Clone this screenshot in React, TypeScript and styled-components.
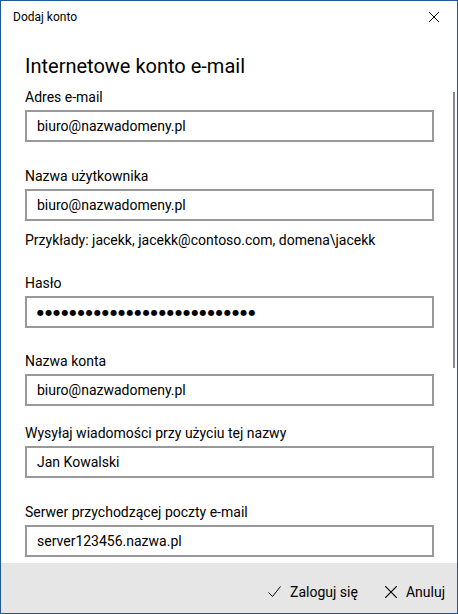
import styled, { createGlobalStyle } from "styled-components";

const GlobalStyle = createGlobalStyle`
  html, body {
    margin: 0;
    padding: 0;
    background: #ffffff;
  }
  body {
    font-family: Roboto, "Noto Sans", sans-serif;
    color: #000;
  }
`;

// window chrome
const Window = styled.div`
  width: 458px;
  height: 614px;
  box-sizing: border-box;
  border: 1px solid #1f5a96;
  display: flex;
  flex-direction: column;
  background: #fff;
  overflow: hidden;
`;

const TitleBar = styled.div`
  flex: 0 0 auto;
  height: 31px;
  display: flex;
  align-items: center;
  justify-content: space-between;
  padding-left: 12px;
  font-size: 12px;
`;

const CloseButton = styled.button`
  width: 46px;
  height: 31px;
  border: 0;
  padding: 0;
  background: transparent;
  display: flex;
  align-items: center;
  justify-content: center;
`;

const Content = styled.div`
  flex: 1;
  position: relative;
  padding: 0 23px 0 24px;
  overflow: hidden;
`;

const Heading = styled.h1`
  margin: 20px 0 0;
  font-size: 20px;
  line-height: 28px;
  font-weight: 400;
`;

const Field = styled.div<{ $gap: number }>`
  margin-top: ${(p) => p.$gap}px;
  display: flex;
  flex-direction: column;
`;

const Label = styled.label`
  font-size: 14px;
  line-height: 20px;
  margin-bottom: 3px;
`;

const Box = styled.div`
  height: 32px;
  box-sizing: border-box;
  border: 2px solid #999;
  padding: 0 10px;
  display: flex;
  align-items: center;
  font-size: 14px;
`;

const Dots = styled.span`
  font-family: "DejaVu Sans", sans-serif;
  font-size: 8px;
  letter-spacing: 1.15px;
`;

const Hint = styled.div`
  margin-top: 9px;
  font-size: 14px;
  line-height: 20px;
`;

const ScrollThumb = styled.div`
  position: absolute;
  top: 60px;
  right: 2px;
  width: 2px;
  height: 276px;
  background: #8a8a8a;
`;

const Footer = styled.div`
  flex: 0 0 50px;
  background: #e6e6e6;
  display: flex;
  justify-content: flex-end;
  align-items: center;
  gap: 27px;
  padding: 8px 12px 0 0;
  box-sizing: border-box;
`;

const ActionButton = styled.button`
  border: 0;
  padding: 0;
  background: transparent;
  display: flex;
  align-items: center;
  gap: 9px;
  font-family: inherit;
  font-size: 14px;
  color: #000;
`;

const fields = [
  { label: "Adres e-mail", value: "biuro@nazwadomeny.pl", gap: 7 },
  {
    label: "Nazwa użytkownika",
    value: "biuro@nazwadomeny.pl",
    gap: 24,
    hint: "Przykłady: jacekk, jacekk@contoso.com, domena\\jacekk",
  },
  { label: "Hasło", value: "", password: 27, gap: 23 },
  { label: "Nazwa konta", value: "biuro@nazwadomeny.pl", gap: 23 },
  { label: "Wysyłaj wiadomości przy użyciu tej nazwy", value: "Jan Kowalski", gap: 17 },
  { label: "Serwer przychodzącej poczty e-mail", value: "server123456.nazwa.pl", gap: 24 },
];

function CrossIcon({ size }: { size: number }) {
  return (
    <svg width={size} height={size} viewBox="0 0 10 10">
      <path d="M0 0 L10 10 M10 0 L0 10" stroke="#000" strokeWidth="1" fill="none" />
    </svg>
  );
}

function CheckIcon() {
  return (
    <svg width="13" height="12" viewBox="0 0 13 12">
      <path d="M0.5 6.5 L4.5 10.5 L12.5 0.5" stroke="#000" strokeWidth="1" fill="none" />
    </svg>
  );
}

export default function App() {
  return (
    <>
      <GlobalStyle />
      <Window>
        <TitleBar>
          <span>Dodaj konto</span>
          <CloseButton>
            <CrossIcon size={10} />
          </CloseButton>
        </TitleBar>
        <Content>
          <Heading>Internetowe konto e-mail</Heading>
          {fields.map((f) => (
            <Field key={f.label} $gap={f.gap}>
              <Label>{f.label}</Label>
              <Box>{f.password ? <Dots>{"●".repeat(f.password)}</Dots> : f.value}</Box>
              {f.hint && <Hint>{f.hint}</Hint>}
            </Field>
          ))}
          <ScrollThumb />
        </Content>
        <Footer>
          <ActionButton>
            <CheckIcon />
            Zaloguj się
          </ActionButton>
          <ActionButton>
            <CrossIcon size={12} />
            Anuluj
          </ActionButton>
        </Footer>
      </Window>
    </>
  );
}
